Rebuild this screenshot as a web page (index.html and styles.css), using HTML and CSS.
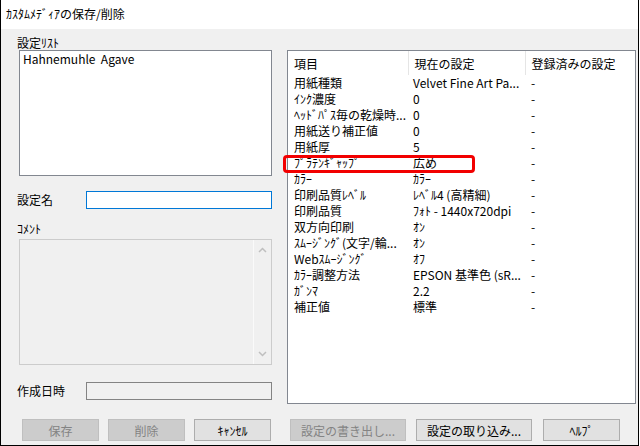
FILE: index.html
```html
<!DOCTYPE html>
<html lang="ja">

<head>
    <meta charset="UTF-8">
    <title>ｶｽﾀﾑﾒﾃﾞｨｱの保存/削除</title>
    <link rel="stylesheet" href="styles.css">
</head>

<body>
    <div class="window">
        <div class="titlebar">ｶｽﾀﾑﾒﾃﾞｨｱの保存/削除</div>

        <div class="client">
            <div class="main">
                <div class="left">
                    <div class="label">設定ﾘｽﾄ</div>
                    <div class="listbox">
                        <div class="list-item">Hahnemuhle&nbsp;&nbsp;Agave</div>
                    </div>

                    <div class="field-row name-row">
                        <span class="field-label">設定名</span>
                        <div class="textbox active"></div>
                    </div>

                    <div class="label comment-label">ｺﾒﾝﾄ</div>
                    <div class="memo">
                        <div class="memo-text"></div>
                        <div class="scrollbar">
                            <svg width="17" height="14" viewBox="0 0 17 14">
                                <path d="M5 9 L8.5 5.5 L12 9" fill="none" stroke="#bfbfbf" stroke-width="1.5" />
                            </svg>
                            <svg width="17" height="14" viewBox="0 0 17 14">
                                <path d="M5 5 L8.5 8.5 L12 5" fill="none" stroke="#bfbfbf" stroke-width="1.5" />
                            </svg>
                        </div>
                    </div>

                    <div class="field-row date-row">
                        <span class="field-label">作成日時</span>
                        <div class="textbox readonly"></div>
                    </div>
                </div>

                <div class="panel">
                    <table class="settings">
                        <colgroup>
                            <col class="col-item">
                            <col class="col-current">
                            <col>
                        </colgroup>
                        <thead>
                            <tr>
                                <th>項目</th>
                                <th>現在の設定</th>
                                <th>登録済みの設定</th>
                            </tr>
                        </thead>
                        <tbody>
                            <tr><td>用紙種類</td><td>Velvet Fine Art Pa...</td><td>-</td></tr>
                            <tr><td>ｲﾝｸ濃度</td><td>0</td><td>-</td></tr>
                            <tr><td>ﾍｯﾄﾞﾊﾟｽ毎の乾燥時...</td><td>0</td><td>-</td></tr>
                            <tr><td>用紙送り補正値</td><td>0</td><td>-</td></tr>
                            <tr><td>用紙厚</td><td>5</td><td>-</td></tr>
                            <tr><td>ﾌﾟﾗﾃﾝｷﾞｬｯﾌﾟ</td><td>広め</td><td>-</td></tr>
                            <tr><td>ｶﾗｰ</td><td>ｶﾗｰ</td><td>-</td></tr>
                            <tr><td>印刷品質ﾚﾍﾞﾙ</td><td>ﾚﾍﾞﾙ4 (高精細)</td><td>-</td></tr>
                            <tr><td>印刷品質</td><td>ﾌｫﾄ - 1440x720dpi</td><td>-</td></tr>
                            <tr><td>双方向印刷</td><td>ｵﾝ</td><td>-</td></tr>
                            <tr><td>ｽﾑｰｼﾞﾝｸﾞ(文字/輪...</td><td>ｵﾝ</td><td>-</td></tr>
                            <tr><td>Webｽﾑｰｼﾞﾝｸﾞ</td><td>ｵﾌ</td><td>-</td></tr>
                            <tr><td>ｶﾗｰ調整方法</td><td>EPSON 基準色 (sR...</td><td>-</td></tr>
                            <tr><td>ｶﾞﾝﾏ</td><td>2.2</td><td>-</td></tr>
                            <tr><td>補正値</td><td>標準</td><td>-</td></tr>
                        </tbody>
                    </table>
                    <div class="highlight"></div>
                </div>
            </div>

            <div class="buttons">
                <button class="btn" disabled>保存</button>
                <button class="btn" disabled>削除</button>
                <button class="btn">ｷｬﾝｾﾙ</button>
                <button class="btn wide export" disabled>設定の書き出し...</button>
                <button class="btn wide">設定の取り込み...</button>
                <button class="btn help">ﾍﾙﾌﾟ</button>
            </div>
        </div>
    </div>
</body>

</html>
```

FILE: styles.css
```css
body {
    margin: 0;
    background-color: #fff;
    font-family: "Noto Sans CJK JP", "Liberation Sans", sans-serif;
    font-size: 12px;
    color: #000;
}

.window {
    width: 639px;
    height: 446px;
    box-sizing: border-box;
    border-left: 1px solid #000;
    border-right: 1px solid #000;
    border-bottom: 1px solid #000;
    display: flex;
    flex-direction: column;
}

.titlebar {
    height: 29px;
    line-height: 28px;
    padding-left: 5px;
    background-color: #fff;
    white-space: nowrap;
}

.client {
    flex: 1;
    background-color: #f0f0f0;
    padding: 6px 0 0 0;
}

.main {
    display: flex;
    align-items: flex-start;
}

/* left column */
.left {
    width: 255px;
    margin-left: 16px;
}

.label {
    height: 15px;
    line-height: 15px;
}

.listbox {
    margin-left: 2px;
    width: 253px;
    height: 126px;
    box-sizing: border-box;
    border: 1px solid #828790;
    background-color: #fff;
}

.list-item {
    padding: 1px 0 0 3px;
    line-height: 14px;
    white-space: pre;
}

.field-row {
    display: flex;
    align-items: center;
}

.field-label {
    width: 69px;
    line-height: 16px;
}

.textbox {
    width: 186px;
    height: 18px;
    box-sizing: border-box;
}

.name-row {
    margin-top: 15px;
}

.textbox.active {
    border: 1px solid #0078d7;
    background-color: #fff;
}

.comment-label {
    margin-top: 13px;
    height: 14px;
    line-height: 14px;
}

.memo {
    margin-top: 3px;
    margin-left: 2px;
    width: 253px;
    height: 126px;
    box-sizing: border-box;
    border: 1px solid #cccccc;
    display: flex;
}

.memo-text {
    flex: 1;
}

.scrollbar {
    width: 17px;
    border-left: 1px solid #fafafa;
    display: flex;
    flex-direction: column;
    justify-content: space-between;
    padding: 3px 0 3px 0;
}

.scrollbar svg {
    display: block;
}

.date-row {
    margin-top: 17px;
}

.textbox.readonly {
    border: 1px solid #838383;
    background-color: #f0f0f0;
}

/* right list view */
.panel {
    position: relative;
    margin: 15px 0 0 15px;
    width: 349px;
    height: 354px;
    box-sizing: border-box;
    border: 1px solid #828790;
    background-color: #fff;
}

.settings {
    width: 100%;
    table-layout: fixed;
    border-collapse: collapse;
}

.col-item {
    width: 120px;
}

.col-current {
    width: 117px;
}

.settings th {
    height: 24px;
    padding: 0 0 0 6px;
    text-align: left;
    font-weight: normal;
    border-right: 1px solid #e5e5e5;
    white-space: nowrap;
}

.settings th:last-child {
    border-right: none;
}

.settings td {
    height: 16px;
    line-height: 16px;
    padding: 0 0 0 6px;
    white-space: nowrap;
    overflow: hidden;
}

.settings td:nth-child(2) {
    padding-left: 5px;
}

.highlight {
    position: absolute;
    left: -5px;
    top: 104px;
    width: 192px;
    height: 18px;
    box-sizing: border-box;
    border: 3px solid #f20000;
    border-radius: 4px;
}

/* bottom buttons */
.buttons {
    display: flex;
    margin: 15px 0 0 21px;
}

.btn {
    width: 77px;
    height: 22px;
    margin-right: 9px;
    padding: 0;
    box-sizing: border-box;
    font-family: "Noto Sans CJK JP", "Liberation Sans", sans-serif;
    font-size: 12px;
    color: #000;
    background-color: #e1e1e1;
    border: 1px solid #adadad;
}

.btn:disabled {
    color: #838383;
    background-color: #cccccc;
    border-color: #bfbfbf;
}

.btn.wide {
    width: 116px;
    margin-right: 10px;
}

.export {
    margin-left: 10px;
}

.help {
    margin-left: 1px;
}
```
